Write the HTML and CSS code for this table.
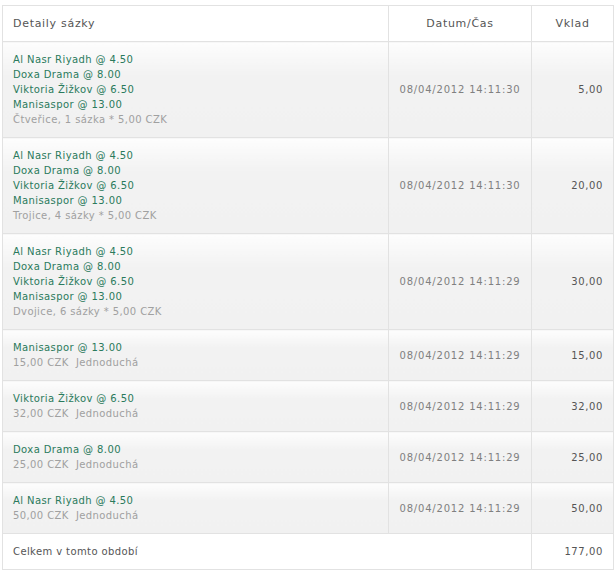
FILE: index.html
```html
<!DOCTYPE html>
<html>
<head>
<meta charset="utf-8">
<link rel="stylesheet" href="styles.css">
</head>
<body>
<table class="bets">
  <thead>
    <tr>
      <th class="c-det">Detaily sázky</th>
      <th class="c-date">Datum/Čas</th>
      <th class="c-amt">Vklad</th>
    </tr>
  </thead>
  <tbody>
    <tr class="row">
      <td class="c-det">
        <div class="sel">Al Nasr Riyadh @ 4.50</div>
        <div class="sel">Doxa Drama @ 8.00</div>
        <div class="sel">Viktoria Žižkov @ 6.50</div>
        <div class="sel">Manisaspor @ 13.00</div>
        <div class="info">Čtveřice, 1 sázka * 5,00 CZK</div>
      </td>
      <td class="c-date">08/04/2012 14:11:30</td>
      <td class="c-amt">5,00</td>
    </tr>
    <tr class="row">
      <td class="c-det">
        <div class="sel">Al Nasr Riyadh @ 4.50</div>
        <div class="sel">Doxa Drama @ 8.00</div>
        <div class="sel">Viktoria Žižkov @ 6.50</div>
        <div class="sel">Manisaspor @ 13.00</div>
        <div class="info">Trojice, 4 sázky * 5,00 CZK</div>
      </td>
      <td class="c-date">08/04/2012 14:11:30</td>
      <td class="c-amt">20,00</td>
    </tr>
    <tr class="row">
      <td class="c-det">
        <div class="sel">Al Nasr Riyadh @ 4.50</div>
        <div class="sel">Doxa Drama @ 8.00</div>
        <div class="sel">Viktoria Žižkov @ 6.50</div>
        <div class="sel">Manisaspor @ 13.00</div>
        <div class="info">Dvojice, 6 sázky * 5,00 CZK</div>
      </td>
      <td class="c-date">08/04/2012 14:11:29</td>
      <td class="c-amt">30,00</td>
    </tr>
    <tr class="row">
      <td class="c-det">
        <div class="sel">Manisaspor @ 13.00</div>
        <div class="info">15,00 CZK&nbsp; Jednoduchá</div>
      </td>
      <td class="c-date">08/04/2012 14:11:29</td>
      <td class="c-amt">15,00</td>
    </tr>
    <tr class="row">
      <td class="c-det">
        <div class="sel">Viktoria Žižkov @ 6.50</div>
        <div class="info">32,00 CZK&nbsp; Jednoduchá</div>
      </td>
      <td class="c-date">08/04/2012 14:11:29</td>
      <td class="c-amt">32,00</td>
    </tr>
    <tr class="row">
      <td class="c-det">
        <div class="sel">Doxa Drama @ 8.00</div>
        <div class="info">25,00 CZK&nbsp; Jednoduchá</div>
      </td>
      <td class="c-date">08/04/2012 14:11:29</td>
      <td class="c-amt">25,00</td>
    </tr>
    <tr class="row">
      <td class="c-det">
        <div class="sel">Al Nasr Riyadh @ 4.50</div>
        <div class="info">50,00 CZK&nbsp; Jednoduchá</div>
      </td>
      <td class="c-date">08/04/2012 14:11:29</td>
      <td class="c-amt">50,00</td>
    </tr>
    <tr class="total">
      <td class="c-tot" colspan="2">Celkem v tomto období</td>
      <td class="c-amt">177,00</td>
    </tr>
  </tbody>
</table>
</body>
</html>
```

FILE: styles.css
```css
html, body {
  margin: 0;
  padding: 0;
  background: #ffffff;
}

body {
  font-family: "DejaVu Sans", Verdana, sans-serif;
  font-size: 10px;
  line-height: 15px;
  letter-spacing: 0.4px;
}

.bets {
  border-collapse: collapse;
  margin: 5px 0 0 2px;
  width: 612px;
  table-layout: fixed;
}

.bets th,
.bets td {
  border: 1px solid #e2e2e2;
  padding: 10px;
  vertical-align: middle;
  font-weight: normal;
}

.bets th {
  color: #555555;
  font-size: 11px;
  letter-spacing: 0.7px;
  background: #ffffff;
}

th.c-det {
  text-align: left;
  width: 365px;
}

th.c-date {
  width: 122px;
  text-align: center;
}

th.c-amt {
  text-align: center;
}

.row td {
  background: linear-gradient(#fdfdfd 0, #f2f2f2 35%, #f1f1f1 100%);
}

td.c-date {
  text-align: center;
  color: #808080;
  letter-spacing: 0.8px;
}

td.c-amt {
  text-align: right;
  color: #555555;
  letter-spacing: 0.6px;
}

.sel {
  color: #2a7a5c;
}

.info {
  color: #a0a0a0;
}

.total td {
  background: #ffffff;
  color: #555555;
}

.c-tot {
  text-align: left;
}
```
